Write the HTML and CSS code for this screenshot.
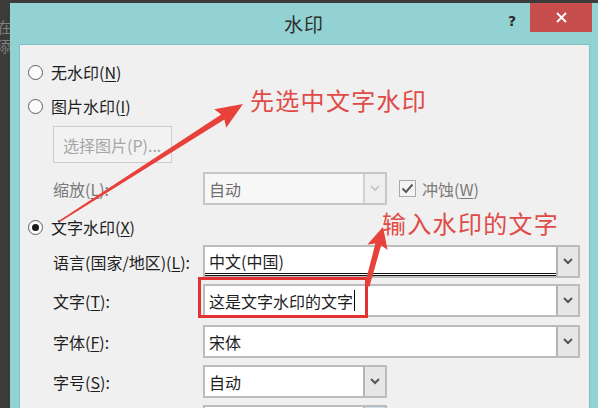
FILE: index.html
```html
<!DOCTYPE html>
<html lang="zh-CN">
<head>
<meta charset="utf-8">
<title>水印</title>
<link rel="stylesheet" href="styles.css">
</head>
<body>
<div class="screen">
  <div class="bg-strip"><span>在</span><span>添</span></div>
  <div class="dialog">
    <div class="titlebar">
      <div></div>
      <div class="title">水印</div>
      <div class="controls">
        <span class="help">?</span>
        <span class="close"><svg width="11" height="11" viewBox="0 0 11 11"><path d="M1 1 L10 10 M10 1 L1 10" stroke="#fff" stroke-width="1.8" fill="none"/></svg></span>
      </div>
    </div>
    <div class="frame">
      <div class="content">
        <div class="radio-row r1"><span class="radio"></span><span>无水印(<u>N</u>)</span></div>
        <div class="radio-row r2"><span class="radio"></span><span>图片水印(<u>I</u>)</span></div>
        <div class="indent btn-row"><div class="btn">选择图片(P)...</div></div>
        <div class="field-row scale">
          <span class="label dim">缩放(<u>L</u>):</span>
          <div class="combo short disabled">
            <span class="val">自动</span>
            <span class="drop"><svg width="10" height="7" viewBox="0 0 10 7"><path d="M1 1 L5 5 L9 1" stroke="#c2c2c2" stroke-width="1.6" fill="none"/></svg></span>
          </div>
          <span class="check"><span class="box"><svg width="13" height="11" viewBox="0 0 13 11"><path d="M1.5 5.5 L5 9 L11.5 1.5" stroke="#5a5a5a" stroke-width="2" fill="none"/></svg></span><span class="dim">冲蚀(<u>W</u>)</span></span>
        </div>
        <div class="radio-row r3"><span class="radio on"></span><span>文字水印(<u>X</u>)</span></div>
        <div class="field-row lang">
          <span class="label">语言(国家/地区)(<u>L</u>):</span>
          <div class="combo">
            <span class="val stacked"><span>中文(中国)</span><span class="rule"></span></span>
            <span class="drop"><svg width="10" height="7" viewBox="0 0 10 7"><path d="M1 1 L5 5 L9 1" stroke="#555" stroke-width="2" fill="none"/></svg></span>
          </div>
        </div>
        <div class="field-row text">
          <span class="label">文字(<u>T</u>):</span>
          <div class="combo">
            <span class="val">这是文字水印的文字<span class="caret"></span></span>
            <span class="drop"><svg width="10" height="7" viewBox="0 0 10 7"><path d="M1 1 L5 5 L9 1" stroke="#555" stroke-width="2" fill="none"/></svg></span>
          </div>
        </div>
        <div class="field-row font">
          <span class="label">字体(<u>F</u>):</span>
          <div class="combo">
            <span class="val">宋体</span>
            <span class="drop"><svg width="10" height="7" viewBox="0 0 10 7"><path d="M1 1 L5 5 L9 1" stroke="#555" stroke-width="2" fill="none"/></svg></span>
          </div>
        </div>
        <div class="field-row size">
          <span class="label">字号(<u>S</u>):</span>
          <div class="combo short">
            <span class="val">自动</span>
            <span class="drop"><svg width="10" height="7" viewBox="0 0 10 7"><path d="M1 1 L5 5 L9 1" stroke="#555" stroke-width="2" fill="none"/></svg></span>
          </div>
        </div>
        <div class="field-row color">
          <span class="label"></span>
          <div class="combo short colorpick">
            <span class="val"></span>
            <span class="drop"></span>
          </div>
        </div>
      </div>
    </div>
  </div>

  <div class="note note1">先选中文字水印</div>
  <div class="note note2">输入水印的文字</div>
  <div class="redbox"></div>
  <svg class="arrows" width="598" height="408" viewBox="0 0 598 408">
    <polygon fill="#e8403a" points="59.3,220.4 221.2,114.4 214.3,109.3 243,104 226.2,127.8 224.4,119.5 60.7,221.6"/>
    <polygon fill="#e8403a" points="364.6,285.3 375.4,243.6 367.4,244.6 383,227 387.6,250.0 381.2,245.2 369.4,286.7"/>
  </svg>
</div>
</body>
</html>
```

FILE: styles.css
```css
* { box-sizing: border-box; }
html, body { margin: 0; padding: 0; }
body {
  width: 598px;
  height: 408px;
  overflow: hidden;
  background: #3b3b3b;
  font-family: "Noto Sans CJK SC", "Noto Sans", sans-serif;
  font-size: 16px;
  color: #1e1e1e;
}
u { text-decoration-thickness: 1px; text-underline-offset: 2px; }

.screen {
  position: relative;
  display: flex;
  width: 598px;
  height: 408px;
}

.bg-strip {
  width: 10px;
  flex: none;
  overflow: hidden;
  padding-top: 17px;
  color: #7d7d7d;
  font-size: 15px;
  line-height: 19px;
}
.bg-strip span { display: block; margin-left: -3px; }

.dialog {
  flex: 1;
  margin-top: 3px;
  background: #93d2d2;
  display: flex;
  flex-direction: column;
  min-width: 0;
}

.titlebar {
  height: 41px;
  flex: none;
  display: grid;
  grid-template-columns: 1fr auto 1fr;
  align-items: center;
}
.title {
  font-size: 19px;
  letter-spacing: 1px;
  color: #2e2e2e;
  line-height: 24px;
}
.controls {
  align-self: start;
  display: flex;
  justify-content: flex-end;
  align-items: flex-start;
}
.help {
  font-family: "DejaVu Sans", sans-serif;
  font-weight: bold;
  font-size: 14px;
  line-height: 14px;
  color: #2a2a2a;
  margin-top: 11px;
  margin-right: 14px;
}
.close {
  width: 62px;
  height: 29px;
  margin-right: 6px;
  background: #c84e4e;
  display: flex;
  align-items: center;
  justify-content: center;
}

.frame {
  flex: 1;
  padding: 0 8px 0 9px;
  display: flex;
}
.content {
  flex: 1;
  background: #f0f0f0;
  border: 1px solid #82c2c2;
  border-bottom: none;
  padding: 11px 9px 0 8px;
  display: flex;
  flex-direction: column;
}

.radio-row {
  height: 32px;
  display: flex;
  align-items: center;
  gap: 8px;
  line-height: 20px;
}
.r2 { margin-top: 2px; }
.r3 { margin-top: 6px; }
.radio {
  width: 15px;
  height: 15px;
  border-radius: 50%;
  border: 1px solid #5f5f5f;
  background: #fbfbfb;
  display: flex;
  align-items: center;
  justify-content: center;
  flex: none;
}
.radio.on::after {
  content: "";
  width: 7px;
  height: 7px;
  border-radius: 50%;
  background: #1a1a1a;
}

.indent { padding-left: 25px; }
.btn-row { margin-top: 4px; display: flex; }
.btn {
  width: 119px;
  height: 37px;
  border: 1px solid #cdcdcd;
  background: #f2f2f2;
  color: #a6a6a6;
  padding-left: 9px;
  display: flex;
  align-items: center;
  line-height: 20px;
}

.field-row {
  display: flex;
  align-items: center;
  padding-left: 25px;
  height: 33px;
}
.scale { margin-top: 9px; }
.lang { margin-top: 2px; }
.text { margin-top: 6px; }
.font { margin-top: 8px; }
.size { margin-top: 7px; }
.color { margin-top: 7px; }

.label {
  width: 150px;
  flex: none;
  line-height: 20px;
  white-space: nowrap;
}
.dim { color: #7a7a7a; }

.combo {
  width: 377px;
  height: 33px;
  flex: none;
  border: 2px solid #bcbcbc;
  background: #fff;
  display: flex;
}
.combo.short { width: 184px; }
.val {
  flex: 1;
  display: flex;
  align-items: center;
  padding-left: 4px;
  line-height: 20px;
  white-space: nowrap;
}
.val.stacked {
  flex-direction: column;
  align-items: stretch;
  justify-content: flex-start;
  padding-top: 4px;
  padding-right: 0;
}
.rule {
  display: block;
  margin: 2px 0 0 -4px;
  height: 4px;
  border-top: 1px solid #111;
  border-bottom: 1px solid #111;
}
.caret {
  display: inline-block;
  width: 1px;
  height: 21px;
  background: #000;
  margin-left: 1px;
}
.drop {
  width: 22px;
  flex: none;
  background: #e6e6e6;
  border-left: 2px solid #b4b4b4;
  display: flex;
  align-items: center;
  justify-content: center;
}

.combo.disabled {
  background: #f7f7f7;
  border-color: #c6c6c6;
  color: #6e6e6e;
}
.combo.disabled .drop {
  background: #efefef;
  border-left-color: #d2d2d2;
}
.colorpick .drop {
  background: #cfe1f1;
  border-left-color: #a9c5dc;
}

.check {
  display: flex;
  align-items: center;
  margin-left: 12px;
  gap: 6px;
  line-height: 20px;
}
.box {
  width: 17px;
  height: 17px;
  border: 1px solid #a9a9a9;
  background: #f4f4f4;
  display: flex;
  align-items: center;
  justify-content: center;
}

.note {
  position: absolute;
  font-size: 24px;
  line-height: 24px;
  letter-spacing: 1.3px;
  color: #e04a47;
  white-space: nowrap;
}
.note1 { left: 250px; top: 88px; }
.note2 { left: 382px; top: 211px; }

.redbox {
  position: absolute;
  left: 198px;
  top: 277px;
  width: 170px;
  height: 41px;
  border: 3px solid #e23232;
}
.arrows {
  position: absolute;
  left: 0;
  top: 0;
  pointer-events: none;
}
```
